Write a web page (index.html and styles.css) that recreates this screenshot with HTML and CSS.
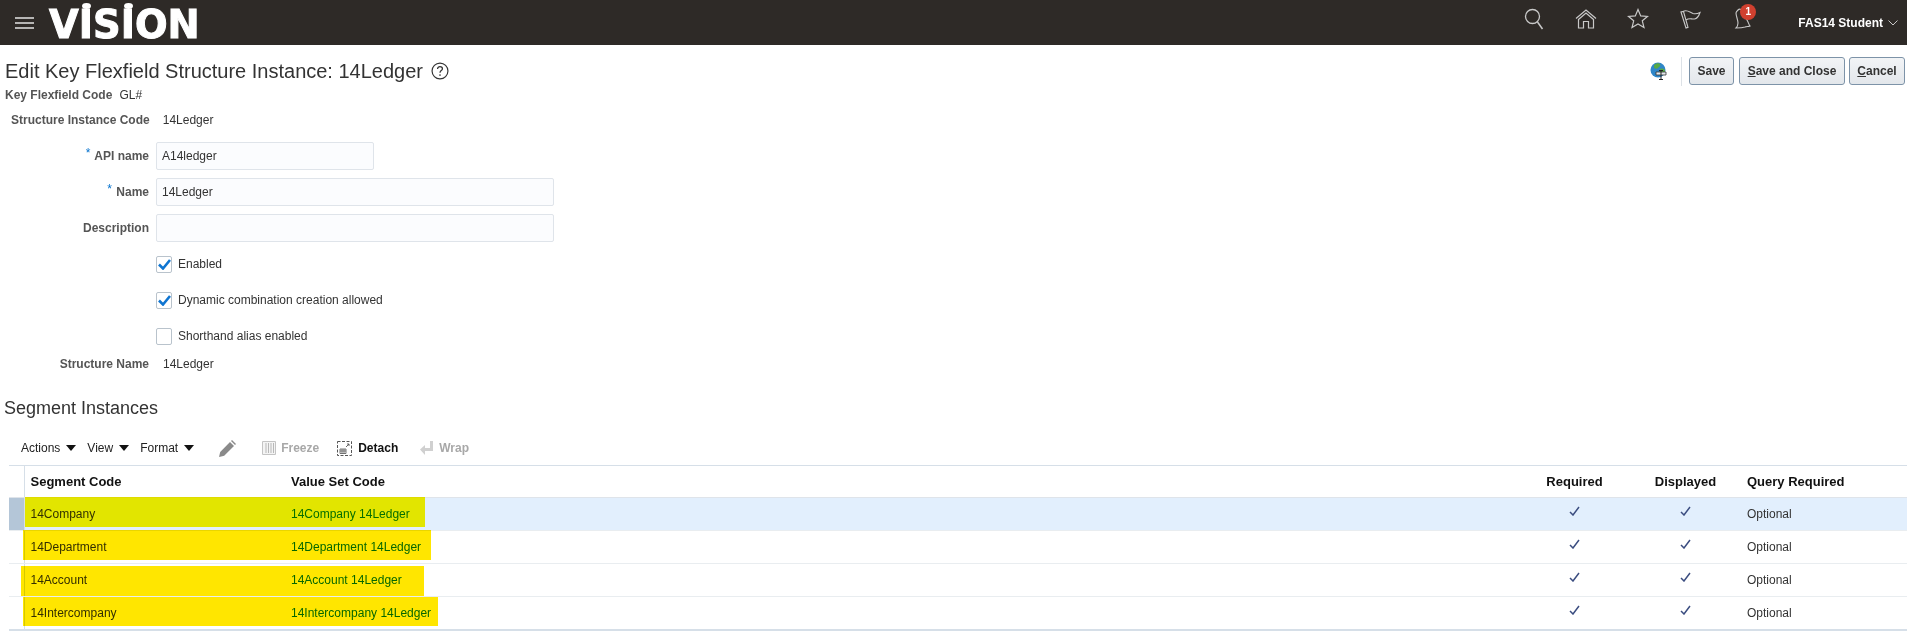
FILE: index.html
```html
<!DOCTYPE html>
<html lang="en">
<head>
    <meta charset="UTF-8">
    <title>Edit Key Flexfield Structure Instance</title>
    <link rel="stylesheet" href="styles.css">
</head>
<body>
    <div class="topbar">
        <svg class="burger" width="19" height="12" viewBox="0 0 19 12"><path d="M0 1h19M0 6h19M0 11h19" stroke="#e4e4e4" stroke-width="1.500"/></svg>
        <div class="logo">V<span class="logo-i">I</span>S<span class="logo-i">I</span>ON</div>
        <div class="topbar-icons">
            <svg class="ti ti-search" width="24" height="24" viewBox="0 0 24 24"><circle cx="9.500" cy="9.500" r="7" fill="none" stroke="#c9c9c9" stroke-width="1.300"/><path d="M14.500 15l5 7" stroke="#c9c9c9" stroke-width="1.500" fill="none"/></svg>
            <svg class="ti ti-home" width="22" height="20" viewBox="0 0 22 20"><path d="M1 9.500L11 1l10 8.500M3.500 10.500L11 4l7.500 6.500M3.500 10v9h5v-6.500h5V19h5v-9" fill="none" stroke="#c9c9c9" stroke-width="1.200"/></svg>
            <svg class="ti ti-star" width="22" height="21" viewBox="0 0 22 21"><path d="M11 1.500l2.700 6.400 6.800.5-5.200 4.400 1.700 6.700-6-3.600-6 3.600 1.700-6.700L1.500 8.400l6.800-.5z" fill="none" stroke="#c9c9c9" stroke-width="1.200"/></svg>
            <svg class="ti ti-flag" width="21" height="20" viewBox="0 0 21 20"><path d="M1 3l5 16 2-.7L3.500 2.500zM3 2.500C7 0 10 3.500 13 4.500c3 .8 5 0 7-1-1 3-2.500 6-5.500 6.500-3 .5-5-1.500-8.500 1" fill="none" stroke="#c9c9c9" stroke-width="1.100"/></svg>
            <div class="bell">
                <svg width="18" height="21" viewBox="0 0 18 21"><path d="M5 2c2-2 4 0 5 2l5 10c1 2 1 3 2 4-2 1-3 0-5 1-3 1-6 1-9 1 1-1 2-2 2-5S3 8 3 5c0-1 1-2 2-3z" fill="none" stroke="#c9c9c9" stroke-width="1.100"/></svg>
                <span class="badge">1</span>
            </div>
        </div>
        <div class="user">FAS14 Student
            <svg width="10" height="6" viewBox="0 0 10 6"><path d="M0.500 0.500L5 5l4.500-4.500" fill="none" stroke="#c9c9c9" stroke-width="1"/></svg>
        </div>
    </div>

    <div class="page-head">
        <h1 class="page-title">Edit Key Flexfield Structure Instance: 14Ledger
            <svg class="help" width="18" height="18" viewBox="0 0 17 17"><circle cx="8.500" cy="8.500" r="7.500" fill="none" stroke="#333" stroke-width="1.100"/><path d="M6.200 6.600c0-1.500 1.100-2.300 2.300-2.300s2.300.8 2.300 2.100c0 1.700-2.300 1.800-2.300 3.700" fill="none" stroke="#333" stroke-width="1.200"/><circle cx="8.500" cy="12.300" r=".8" fill="#333"/></svg>
        </h1>
        <div class="page-actions">
            <svg class="globe" width="17" height="18" viewBox="0 0 17 18"><circle cx="8" cy="8" r="7.500" fill="#2f86c8"/><path d="M4 3c2-2 5-2 6-1 1 2-1 3-2 4S4 7 4 5zM10 7c2-1 4 0 5 1 0 2-1 4-3 5-2-1-3-4-2-6z" fill="#57a845"/><path d="M6 10h10v3H6z" fill="#e4e8ec" stroke="#333" stroke-width=".8"/><path d="M11 9v8M9 17.500h4M9 8.500h4" stroke="#222" stroke-width="1"/></svg>
            <div class="sep"></div>
            <button class="btn btn-save">Save</button>
            <button class="btn btn-close"><u>S</u>ave and Close</button>
            <button class="btn btn-cancel"><u>C</u>ancel</button>
        </div>
    </div>

    <div class="code-line"><b>Key Flexfield Code</b><span>GL#</span></div>
    <div class="instance-line"><b>Structure Instance Code</b><span>14Ledger</span></div>

    <div class="form">
        <div class="form-row">
            <label class="form-label"><i>*</i> API name</label>
            <div class="input input-short">A14ledger</div>
        </div>
        <div class="form-row">
            <label class="form-label"><i>*</i> Name</label>
            <div class="input">14Ledger</div>
        </div>
        <div class="form-row">
            <label class="form-label">Description</label>
            <div class="input"></div>
        </div>
        <div class="form-row">
            <div class="form-label"></div>
            <div class="check"><svg width="13" height="11" viewBox="0 0 13 11"><path d="M1 5.500l4 4L12 1" fill="none" stroke="#0f75d1" stroke-width="2.600"/></svg></div>
            <span>Enabled</span>
        </div>
        <div class="form-row">
            <div class="form-label"></div>
            <div class="check"><svg width="13" height="11" viewBox="0 0 13 11"><path d="M1 5.500l4 4L12 1" fill="none" stroke="#0f75d1" stroke-width="2.600"/></svg></div>
            <span>Dynamic combination creation allowed</span>
        </div>
        <div class="form-row">
            <div class="form-label"></div>
            <div class="check"></div>
            <span>Shorthand alias enabled</span>
        </div>
        <div class="form-row form-row-text">
            <label class="form-label">Structure Name</label>
            <span class="form-value">14Ledger</span>
        </div>
    </div>

    <h2 class="section-title">Segment Instances</h2>

    <div class="toolbar">
        <span class="menu">Actions<em></em></span>
        <span class="menu">View<em></em></span>
        <span class="menu">Format<em></em></span>
        <svg class="tool-edit" width="17" height="17" viewBox="0 0 17 17"><path d="M0 17l1.200-5L11 2l4 4-9.800 9.800zM12 1l1-1 4 4-1 1z" fill="#8a8a8a"/></svg>
        <svg class="tool-freeze" width="14" height="14" viewBox="0 0 14 14"><path d="M.5.500h13v13H.5z" fill="#f4f4f4" stroke="#c4c4c4"/><path d="M4 2v10M6.500 2v10M9 2v10M11.500 2v10" stroke="#b8b8b8" stroke-width="1"/></svg>
        <span class="tool tool-off">Freeze</span>
        <svg class="tool-detach" width="15" height="15" viewBox="0 0 15 15"><path d="M.5.500h14v14H.5z" fill="none" stroke="#555" stroke-dasharray="3 1.500"/><path d="M3 8h6v4.500H3zM3 10h6M5 8v4.500M7 8v4.500" fill="none" stroke="#555" stroke-width=".8"/><path d="M9 6l3-3M10 3h2v2" fill="none" stroke="#555" stroke-width=".9"/></svg>
        <span class="tool">Detach</span>
        <svg class="tool-wrap" width="14" height="14" viewBox="0 0 14 14"><path d="M10 0h3v10H5v4L0 8.500 5 4v3h5z" fill="#d0d0d0"/></svg>
        <span class="tool tool-off">Wrap</span>
    </div>

    <div class="table-wrap">
        <table class="seg-table">
            <colgroup>
                <col class="c-head"><col class="c-seg"><col class="c-val"><col class="c-req"><col class="c-disp"><col>
            </colgroup>
            <thead>
                <tr>
                    <th class="row-head"></th>
                    <th>Segment Code</th>
                    <th>Value Set Code</th>
                    <th class="mid">Required</th>
                    <th class="mid">Displayed</th>
                    <th>Query Required</th>
                </tr>
            </thead>
            <tbody>
                <tr class="selected">
                    <td class="row-head"></td>
                    <td>14Company</td>
                    <td class="link">14Company 14Ledger</td>
                    <td class="mid"><svg class="tick" width="11" height="10" viewBox="0 0 11 10"><path d="M1 6l3 3 6-8" fill="none" stroke="#3b4d80" stroke-width="1.500"/></svg></td>
                    <td class="mid"><svg class="tick" width="11" height="10" viewBox="0 0 11 10"><path d="M1 6l3 3 6-8" fill="none" stroke="#3b4d80" stroke-width="1.500"/></svg></td>
                    <td>Optional</td>
                </tr>
                <tr>
                    <td class="row-head"></td>
                    <td>14Department</td>
                    <td class="link">14Department 14Ledger</td>
                    <td class="mid"><svg class="tick" width="11" height="10" viewBox="0 0 11 10"><path d="M1 6l3 3 6-8" fill="none" stroke="#3b4d80" stroke-width="1.500"/></svg></td>
                    <td class="mid"><svg class="tick" width="11" height="10" viewBox="0 0 11 10"><path d="M1 6l3 3 6-8" fill="none" stroke="#3b4d80" stroke-width="1.500"/></svg></td>
                    <td>Optional</td>
                </tr>
                <tr>
                    <td class="row-head"></td>
                    <td>14Account</td>
                    <td class="link">14Account 14Ledger</td>
                    <td class="mid"><svg class="tick" width="11" height="10" viewBox="0 0 11 10"><path d="M1 6l3 3 6-8" fill="none" stroke="#3b4d80" stroke-width="1.500"/></svg></td>
                    <td class="mid"><svg class="tick" width="11" height="10" viewBox="0 0 11 10"><path d="M1 6l3 3 6-8" fill="none" stroke="#3b4d80" stroke-width="1.500"/></svg></td>
                    <td>Optional</td>
                </tr>
                <tr>
                    <td class="row-head"></td>
                    <td>14Intercompany</td>
                    <td class="link">14Intercompany 14Ledger</td>
                    <td class="mid"><svg class="tick" width="11" height="10" viewBox="0 0 11 10"><path d="M1 6l3 3 6-8" fill="none" stroke="#3b4d80" stroke-width="1.500"/></svg></td>
                    <td class="mid"><svg class="tick" width="11" height="10" viewBox="0 0 11 10"><path d="M1 6l3 3 6-8" fill="none" stroke="#3b4d80" stroke-width="1.500"/></svg></td>
                    <td>Optional</td>
                </tr>
            </tbody>
        </table>
        <!-- marker strokes drawn over the screenshot -->
        <div class="marker marker-1"></div>
        <div class="marker marker-2"></div>
        <div class="marker marker-3"></div>
        <div class="marker marker-4"></div>
    </div>
</body>
</html>
```

FILE: styles.css
```css
html, body {
    margin: 0;
    background: #fff;
    height: 640px;
    overflow: hidden;
}

body {
    font-family: "Liberation Sans", Arial, sans-serif;
    font-size: 12px;
    color: #333;
}

/* top bar */
.topbar {
    display: flex;
    align-items: center;
    height: 45px;
    background: #2e2a27;
    color: #fff;
    box-sizing: border-box;
    padding-left: 15px;
}

.burger {
    margin-right: 15px;
}

.logo {
    font-family: "DejaVu Sans", sans-serif;
    font-weight: bold;
    font-size: 38.400px;
    line-height: 45px;
    padding-top: 3px;
    -webkit-text-stroke: 1px #fff;
    white-space: nowrap;
}

.logo-i {
    position: relative;
}

.logo-i::before {
    content: "";
    position: absolute;
    left: 3px;
    top: 1px;
    width: 9px;
    height: 6px;
    border-radius: 50%;
    background: #fff;
}

.topbar-icons {
    display: flex;
    align-items: center;
    margin-left: auto;
    padding-bottom: 8px;
}

.ti {
    display: block;
}

.ti-search { margin-right: 28px; }
.ti-home { margin-right: 30px; }
.ti-star { margin-right: 31px; }
.ti-flag { margin-right: 32px; }

.bell {
    position: relative;
    height: 21px;
    width: 18px;
}

.badge {
    position: absolute;
    left: 7px;
    top: -4px;
    width: 16px;
    height: 16px;
    border-radius: 50%;
    background: #d0402f;
    color: #fff;
    font-size: 10px;
    font-weight: bold;
    line-height: 16px;
    text-align: center;
}

.user {
    display: flex;
    align-items: center;
    gap: 5px;
    margin-left: 47px;
    margin-right: 9px;
    font-size: 12px;
    font-weight: bold;
}

/* page title and buttons */
.page-head {
    display: flex;
    justify-content: space-between;
    align-items: center;
    padding: 12px 2px 0 5px;
    height: 28px;
}

.page-title {
    display: flex;
    align-items: center;
    gap: 8px;
    margin: 0;
    font-size: 20px;
    font-weight: normal;
    color: #333;
}

.page-actions {
    display: flex;
    align-items: center;
}

.globe {
    margin-right: 14px;
}

.sep {
    width: 1px;
    height: 29px;
    background: #dde2e7;
    margin-right: 7px;
}

.btn {
    box-sizing: border-box;
    height: 28px;
    padding: 0;
    margin: 0;
    border: 1px solid #7d93a8;
    border-radius: 3px;
    background: linear-gradient(#f2f4f6, #e3e7eb);
    font-family: inherit;
    font-size: 12px;
    font-weight: bold;
    color: #333;
}

.btn-save { width: 45px; margin-right: 5px; }
.btn-close { width: 106px; margin-right: 4px; }
.btn-cancel { width: 56px; }

.code-line {
    display: flex;
    gap: 7px;
    margin-top: 3px;
    padding-left: 5px;
    line-height: 14px;
}

.code-line b,
.instance-line b,
.form-label {
    font-weight: bold;
    color: #555;
}

.instance-line {
    display: flex;
    gap: 13px;
    margin-top: 11px;
    padding-left: 11px;
    line-height: 14px;
}

/* form */
.form {
    margin-top: 11px;
}

.form-row {
    display: flex;
    align-items: center;
    height: 36px;
}

.form-row-text {
    height: 20px;
}

.form-label {
    width: 149px;
    margin-right: 7px;
    text-align: right;
}

.form-label i {
    color: #0572ce;
    font-style: normal;
    font-weight: normal;
    position: relative;
    top: -3px;
    margin-right: 1px;
}

.form-value {
    padding-left: 7px;
}

.input {
    box-sizing: border-box;
    width: 398px;
    height: 28px;
    padding-left: 5px;
    line-height: 26px;
    background: #fbfcfe;
    border: 1px solid #dfe4ea;
    border-radius: 2px;
}

.input-short {
    width: 218px;
}

.check {
    box-sizing: border-box;
    display: flex;
    align-items: center;
    justify-content: center;
    width: 16px;
    height: 17px;
    margin-right: 6px;
    border: 1px solid #b9c3cc;
    border-radius: 2px;
    background: #fff;
}

/* segment table */
.section-title {
    margin: 23px 0 0 4px;
    font-size: 18px;
    font-weight: normal;
    line-height: 22px;
    color: #333;
}

.toolbar {
    display: flex;
    align-items: center;
    height: 20px;
    margin-top: 19px;
    padding-left: 21px;
}

.menu {
    display: flex;
    align-items: center;
    margin-right: 11px;
    color: #222;
}

.menu em {
    width: 0;
    height: 0;
    margin-left: 6px;
    border-left: 5px solid transparent;
    border-right: 5px solid transparent;
    border-top: 6px solid #111;
}

.tool {
    font-weight: bold;
    color: #111;
}

.tool-off {
    color: #a8a8a8;
}

.tool-edit { margin: 0 26px 0 14px; }
.tool-freeze { margin-right: 5px; }
.tool-detach { margin: 0 6px 0 18px; }
.tool-wrap { margin: 0 5px 0 22px; }

.table-wrap {
    position: relative;
    margin: 7px 0 0 9px;
}

.seg-table {
    width: 1898px;
    table-layout: fixed;
    border-collapse: collapse;
    border-top: 1px solid #d6dfe8;
    border-bottom: 2px solid #d6dfe8;
}

.c-head { width: 15px; }
.c-seg { width: 261px; }
.c-val { width: 1234px; }
.c-req { width: 111px; }
.c-disp { width: 111px; }

.seg-table th,
.seg-table td {
    padding: 0 0 0 6px;
    text-align: left;
    white-space: nowrap;
}

.seg-table th {
    height: 31px;
    font-size: 13px;
    font-weight: bold;
    color: #111;
    border-bottom: 1px solid #dfe4ea;
}

.seg-table td {
    height: 32px;
    border-bottom: 1px solid #e9edf0;
}

.seg-table tbody tr:last-child td {
    border-bottom: 0;
}

.seg-table .mid {
    padding-left: 0;
    text-align: center;
}

.seg-table .row-head {
    padding: 0;
    border-right: 1px solid #d6dfe8;
}

.seg-table .link {
    color: #0572ce;
}

.selected td {
    background: #e2effd;
}

.selected .row-head {
    background: #b4c6d8;
}

.tick {
    position: relative;
    top: -2px;
}

.marker {
    position: absolute;
    background: #ffe600;
    mix-blend-mode: multiply;
}

.marker-1 { left: 16px; top: 32px; width: 400px; height: 30px; background: #fff500; }
.marker-2 { left: 14px; top: 65px; width: 408px; height: 30px; }
.marker-3 { left: 12px; top: 101px; width: 403px; height: 30px; }
.marker-4 { left: 14px; top: 132px; width: 415px; height: 29px; }
```
